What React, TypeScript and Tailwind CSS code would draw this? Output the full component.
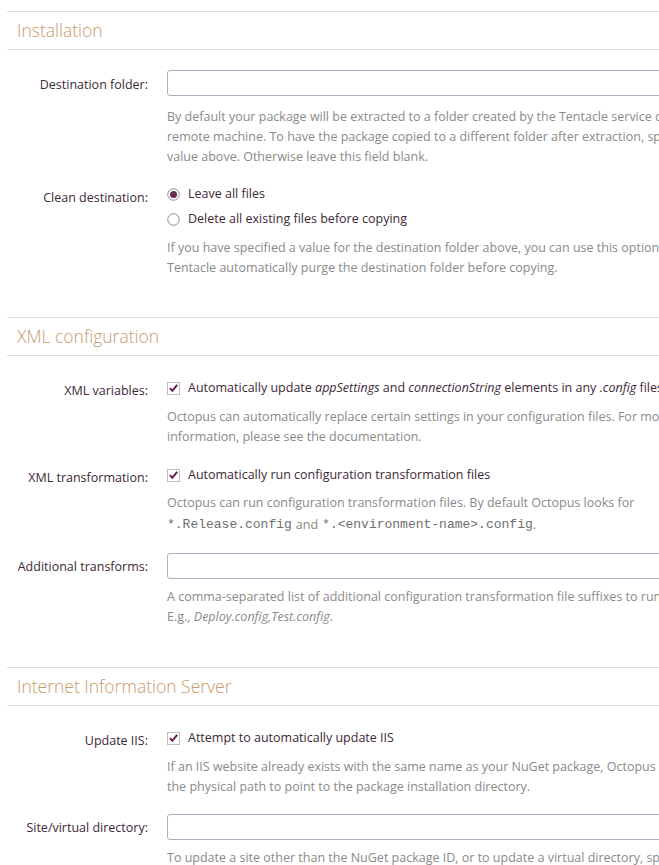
import React from 'react';

const font = { fontFamily: '"Segoe UI", "Open Sans", "Noto Sans", sans-serif' };

function Radio({ checked }: { checked?: boolean }) {
  return (
    <svg width="13" height="13" viewBox="0 0 13 13" className="shrink-0">
      <circle cx="6.5" cy="6.5" r="5.75" fill="#fff" stroke="#8c8c8c" strokeWidth="1" />
      {checked && <circle cx="6.5" cy="6.5" r="3.5" fill="#6a2a52" />}
    </svg>
  );
}

function Check() {
  return (
    <svg width="13" height="13" viewBox="0 0 13 13" className="shrink-0">
      <rect x="0.5" y="0.5" width="12" height="12" fill="#fff" stroke="#7d7d7d" strokeDasharray="1 1" />
      <path d="M3 6.2 L5.3 8.8 L10.2 2.8" fill="none" stroke="#5e2148" strokeWidth="2" />
    </svg>
  );
}

function Help({ lines, className = '' }: { lines: React.ReactNode[]; className?: string }) {
  return (
    <div className={`text-[#8a8a8a] leading-[20px] whitespace-nowrap ${className}`}>
      {lines.map((l, i) => (
        <div key={i}>{l}</div>
      ))}
    </div>
  );
}

function Row({ label, labelPad, className = '', children }: { label: string; labelPad: string; className?: string; children: React.ReactNode }) {
  return (
    <div className={`flex ${className}`}>
      <div className={`w-[160px] shrink-0 pr-[19px] text-right text-[#3d2837] leading-[20px] whitespace-nowrap ${labelPad}`}>{label}</div>
      <div className="flex-1">{children}</div>
    </div>
  );
}

function TextInput() {
  return <div className="h-[26px] w-[720px] rounded-[3px] border border-[#a9b4c4] bg-white" />;
}

function Option({ children, control }: { children: React.ReactNode; control: React.ReactNode }) {
  return (
    <div className="flex h-[25px] items-center gap-[8px] whitespace-nowrap text-[#3d2837]">
      {control}
      <span>{children}</span>
    </div>
  );
}

function Section({ title, className = 'mb-[40px]', children }: { title: string; className?: string; children: React.ReactNode }) {
  return (
    <section className={className}>
      <div className="flex h-[39px] items-center border-y border-[#dedede] pl-[10px] text-[17.5px] font-light text-[#c89a6d]">
        {title}
      </div>
      <div className="pt-[20px]">{children}</div>
    </section>
  );
}

const mono = 'font-["Liberation_Mono","DejaVu_Sans_Mono",monospace] text-[13px] text-[#6e6e6e]';

export default function App() {
  return (
    <div className="h-[865px] w-[659px] overflow-hidden bg-white text-[12.5px]" style={font}>
      <div className="w-[1000px] pl-[7px] pt-[11px]">
        <Section title="Installation" className="mb-[39px]">
          <Row label="Destination folder:" labelPad="pt-[5px]">
            <TextInput />
            <Help
              className="mt-[11px]"
              lines={[
                'By default your package will be extracted to a folder created by the Tentacle service on the',
                'remote machine. To have the package copied to a different folder after extraction, specify a',
                'value above. Otherwise leave this field blank.',
              ]}
            />
          </Row>
          <Row label="Clean destination:" labelPad="pt-[6px]" className="mt-[15px]">
            <Option control={<Radio checked />}>Leave all files</Option>
            <Option control={<Radio />}>Delete all existing files before copying</Option>
            <Help
              className="mt-[6px]"
              lines={[
                'If you have specified a value for the destination folder above, you can use this option to have',
                'Tentacle automatically purge the destination folder before copying.',
              ]}
            />
          </Row>
        </Section>

        <Section title="XML configuration">
          <Row label="XML variables:" labelPad="pt-[5px]">
            <Option control={<Check />}>
              Automatically update <i>appSettings</i> and <i>connectionString</i> elements in any <i>.config</i> files
            </Option>
            <Help
              className="mt-[6px]"
              lines={[
                'Octopus can automatically replace certain settings in your configuration files. For more',
                'information, please see the documentation.',
              ]}
            />
          </Row>
          <Row label="XML transformation:" labelPad="pt-[5px]" className="mt-[16px]">
            <Option control={<Check />}>Automatically run configuration transformation files</Option>
            <div className="mt-[5px] whitespace-nowrap text-[#8a8a8a]">
              <div className="h-[20px] leading-[20px]">Octopus can run configuration transformation files. By default Octopus looks for</div>
              <div className="flex h-[24px] items-center">
                <code className={mono}>*.Release.config</code>
                <span className="mx-[4px]">and</span>
                <code className={mono}>*.&lt;environment-name&gt;.config</code>
                <span>.</span>
              </div>
            </div>
          </Row>
          <Row label="Additional transforms:" labelPad="pt-[4px]" className="mt-[16px]">
            <TextInput />
            <Help
              className="mt-[8px]"
              lines={[
                'A comma-separated list of additional configuration transformation file suffixes to run.',
                <span>
                  E.g., <i>Deploy.config,Test.config</i>.
                </span>,
              ]}
            />
          </Row>
        </Section>

        <Section title="Internet Information Server">
          <Row label="Update IIS:" labelPad="pt-[5px]">
            <Option control={<Check />}>Attempt to automatically update IIS</Option>
            <Help
              className="mt-[6px]"
              lines={[
                'If an IIS website already exists with the same name as your NuGet package, Octopus will update',
                'the physical path to point to the package installation directory.',
              ]}
            />
          </Row>
          <Row label="Site/virtual directory:" labelPad="pt-[4px]" className="mt-[17px]">
            <TextInput />
            <Help
              className="mt-[8px]"
              lines={[
                'To update a site other than the NuGet package ID, or to update a virtual directory, specify the',
                'name here.',
              ]}
            />
          </Row>
        </Section>
      </div>
    </div>
  );
}
